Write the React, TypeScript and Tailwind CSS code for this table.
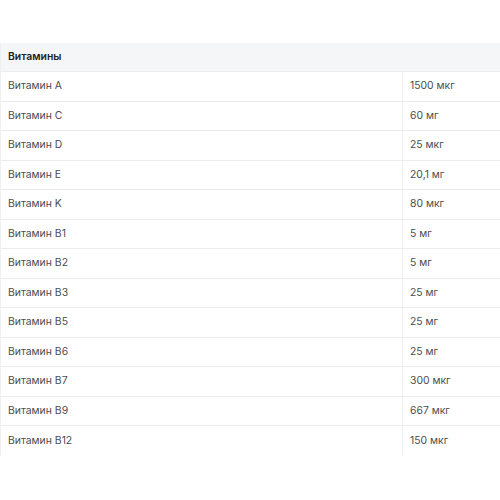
const rows = [
  ["Витамин A", "1500 мкг"],
  ["Витамин C", "60 мг"],
  ["Витамин D", "25 мкг"],
  ["Витамин E", "20,1 мг"],
  ["Витамин K", "80 мкг"],
  ["Витамин B1", "5 мг"],
  ["Витамин B2", "5 мг"],
  ["Витамин B3", "25 мг"],
  ["Витамин B5", "25 мг"],
  ["Витамин B6", "25 мг"],
  ["Витамин B7", "300 мкг"],
  ["Витамин B9", "667 мкг"],
  ["Витамин B12", "150 мкг"],
];

export default function App() {
  return (
    <div className="w-[500px] h-[500px] bg-white pt-[43px] font-['Inter',sans-serif] text-[10.4px]">
      <div className="border-l border-[#f0f0f0]">
        <div className="h-[29px] bg-[#f5f6f7] border-b border-[#ececec] flex items-center px-[7px] font-semibold text-[#222]">
          Витамины
        </div>
        {rows.map(([name, value], i) => (
          <div
            key={name}
            className={`h-[29.5px] flex text-[#4d4d4d] ${i < rows.length - 1 ? "border-b border-[#ececec]" : ""}`}
          >
            <div className="w-[402px] flex items-center px-[7px] border-r border-[#f0f0f0]">{name}</div>
            <div className="flex-1 flex items-center px-[7px]">{value}</div>
          </div>
        ))}
      </div>
    </div>
  );
}
